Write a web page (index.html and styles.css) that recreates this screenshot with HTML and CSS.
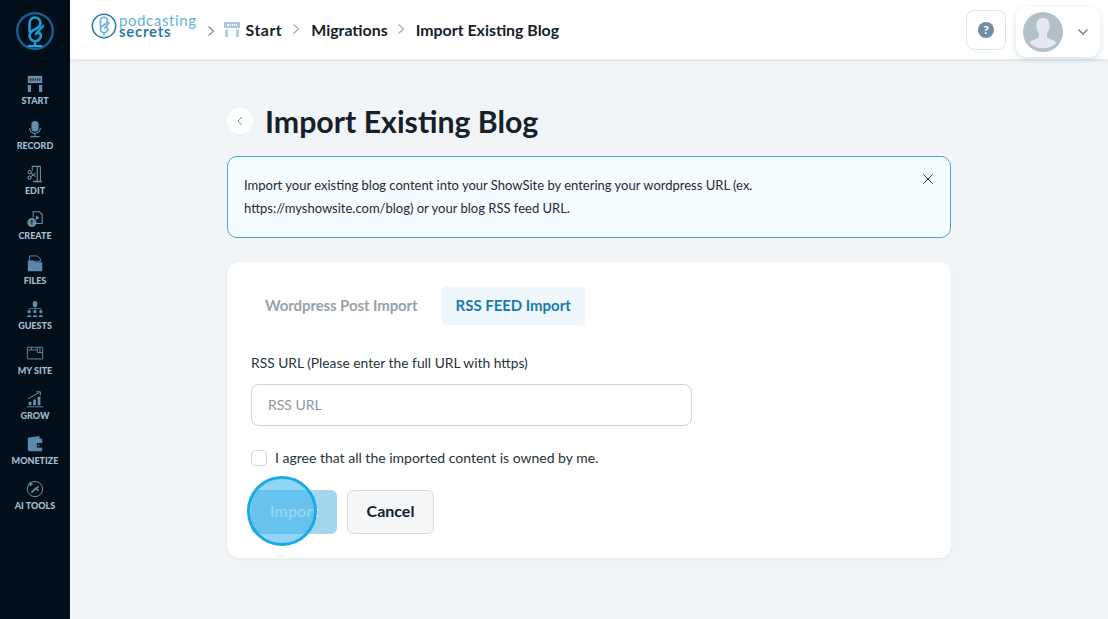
FILE: index.html
```html
<!DOCTYPE html>
<html lang="en">
<head>
<meta charset="utf-8">
<title>Import Existing Blog</title>
<link rel="stylesheet" href="styles.css">
</head>
<body>
<div class="app">
  <aside class="sidebar">
    <svg class="brand" viewBox="0 0 40 40" width="40" height="40" fill="none" stroke="#1c9ad6">
      <circle cx="20" cy="20" r="17.800" stroke="#12628f" stroke-width="2.400"/>
      <path d="M14.500 20V12a5.500 5.500 0 0 1 11 0c0 2.500-2 4.500-5 6-4 2-6 3.500-6 6.500a5.700 5.700 0 0 0 11.400 0c0-1.500-1-2.500-3-3M21 23l7-8M20 30.500v3.500" stroke-width="2.600" stroke-linecap="round"/>
      <path d="M13.500 35h13" stroke="#1fa6e6" stroke-width="2.200" stroke-linecap="round"/>
    </svg>
    <nav class="nav">
      <a class="nav-item"><svg viewBox="0 0 20 20" class="nav-icon"><path d="M2 1h16v8H2z" fill="#6d90aa"/><path d="M4 3.500h2v3H4zM7 3.500h1.500v3H7zM9.500 3.500h1.500v3H9.500zM12 3.500h1.500v3H12zM14.500 3.500h1.500v3h-1.500z" fill="#1f3546"/><path d="M2 11h3.500v8H2zM14.500 11H18v8h-3.500z" fill="#6d90aa"/></svg><span>START</span></a>
      <a class="nav-item"><svg viewBox="0 0 20 20" class="nav-icon"><rect x="6" y="1" width="8" height="12" rx="4" fill="#5f8fb3"/><path d="M4 9a6 6 0 0 0 12 0M10 15v3M5 18.500h10" stroke="#5f8fb3" stroke-width="1.200" fill="none"/></svg><span>RECORD</span></a>
      <a class="nav-item"><svg viewBox="0 0 20 20" class="nav-icon" fill="none" stroke="#6d90aa" stroke-width="1.200"><path d="M7 6V1.500h9V18H8M12.500 2v16M8 18.500h10"/><circle cx="4" cy="8" r="1.800"/><circle cx="4" cy="14" r="1.800"/><path d="M5.500 9l5 4M5.500 13l5-4"/></svg><span>EDIT</span></a>
      <a class="nav-item"><svg viewBox="0 0 20 20" class="nav-icon"><path d="M8 8V2h7l3 3v10h-7" fill="none" stroke="#6d90aa" stroke-width="1.200"/><path d="M11 6l4 2.500-4 2.500z" fill="#6d90aa"/><circle cx="6.500" cy="14" r="5" fill="#6d90aa"/><path d="M6.500 11.500v5M4.500 13.500l2-2 2 2" stroke="#08151f" fill="none"/></svg><span>CREATE</span></a>
      <a class="nav-item"><svg viewBox="0 0 20 20" class="nav-icon"><path d="M4 1h8l4 3v3H4z" fill="none" stroke="#6d90aa"/><path d="M2 6h6l2 2h8v10H2z" fill="#5c89ab"/></svg><span>FILES</span></a>
      <a class="nav-item"><svg viewBox="0 0 20 20" class="nav-icon" fill="#5f8fb3"><rect x="7.500" y="1" width="5" height="7" rx="2.500"/><circle cx="10" cy="13" r="1.800"/><circle cx="3.500" cy="13" r="1.800"/><circle cx="16.500" cy="13" r="1.800"/><path d="M1 19c0-3 5-3 5 0zM7.500 19c0-3 5-3 5 0zM14 19c0-3 5-3 5 0z"/><path d="M10 8v3M3.500 11V9.500h13V11" stroke="#5f8fb3" fill="none" stroke-width=".8"/></svg><span>GUESTS</span></a>
      <a class="nav-item"><svg viewBox="0 0 20 20" class="nav-icon" fill="none" stroke="#6d90aa"><path d="M1.500 2.500h17v12a1 1 0 0 1-1 1h-15a1 1 0 0 1-1-1z"/><path d="M1.500 5.500h11M12.500 2.500v6h6M15.500 2.500v6M6 2.500v3"/></svg><span>MY SITE</span></a>
      <a class="nav-item"><svg viewBox="0 0 20 20" class="nav-icon" fill="#6d90aa"><path d="M2 10L15 2.500M11.500 2H16v4" stroke="#6d90aa" stroke-width="1.100" fill="none"/><path d="M3 13h3v4H3zM8 10.500h3V17H8zM13 7.500h3V17h-3z"/><path d="M1 18.200h18v1H1z"/></svg><span>GROW</span></a>
      <a class="nav-item"><svg viewBox="0 0 20 20" class="nav-icon"><path d="M2 3l13-2v3h3v14H4a2 2 0 0 1-2-2z" fill="#5c89ab"/><path d="M12 9h7v5h-7z" fill="#08151f"/><circle cx="14" cy="11.500" r="1" fill="#5c89ab"/></svg><span>MONETIZE</span></a>
      <a class="nav-item"><svg viewBox="0 0 20 20" class="nav-icon" fill="none" stroke="#6d90aa" stroke-width="1.100"><circle cx="10" cy="10" r="8.500"/><path d="M6 14l5-5 3 3M14 7l-3 3" stroke-width="1.800"/><path d="M5 2v5M2.500 4.500h5" stroke-width="1.500"/></svg><span>AI TOOLS</span></a>
    </nav>
  </aside>

  <div class="workspace">
    <header class="topbar">
      <div class="crumbs">
        <div class="logo">
          <svg viewBox="0 0 40 40" width="26" height="26" fill="none" stroke="#5fb3dc">
            <circle cx="20" cy="20" r="18" stroke="#2f7ba8" stroke-width="2.400"/>
            <path d="M14.500 20V12a5.500 5.500 0 0 1 11 0c0 2.500-2 4.500-5 6-4 2-6 3.500-6 6.500a5.700 5.700 0 0 0 11.400 0c0-1.500-1-2.500-3-3M21 23l7-8M20 30.500v3.500" stroke-width="2.600" stroke-linecap="round"/>
          </svg>
          <div class="logo-text"><span class="logo-top">podcasting</span><span class="logo-bottom">secrets</span></div>
        </div>
        <svg class="chev chev-first" viewBox="0 0 8 12" width="8" height="12"><path d="M1.500 1.500L6.500 6l-5 4.500" fill="none" stroke="#8a949c" stroke-width="1.400"/></svg>
        <svg class="start-icon" viewBox="0 0 16 15" width="16" height="15"><path d="M0 0h16v6H0z" fill="#a9c6dc"/><path d="M3 2h2v2H3zM6 2h1v2H6zM8 2h1v2H8zM10 2h1v2h-1zM12 2h1v2h-1z" fill="#fff"/><path d="M1 7.500h3V15H1zM12 7.500h3V15h-3z" fill="#b7cfe1"/></svg>
        <span class="crumb crumb-start">Start</span>
        <svg class="chev" viewBox="0 0 8 12" width="8" height="12"><path d="M1.500 1.500L6.500 6l-5 4.500" fill="none" stroke="#a3abb2" stroke-width="1.200"/></svg>
        <span class="crumb">Migrations</span>
        <svg class="chev" viewBox="0 0 8 12" width="8" height="12"><path d="M1.500 1.500L6.500 6l-5 4.500" fill="none" stroke="#a3abb2" stroke-width="1.200"/></svg>
        <span class="crumb">Import Existing Blog</span>
      </div>
      <div class="top-actions">
        <button class="help-btn" type="button"><span class="help-dot">?</span></button>
        <div class="user">
          <svg class="avatar" viewBox="0 0 40 40" width="40" height="40">
            <circle cx="20" cy="20" r="20" fill="#b3c0c8"/>
            <path d="M20 6c-5 0-7 4-6.500 9 .3 3 1.500 5 2.500 6.500V25c-1 2-7 2.500-9.500 6A20 20 0 0 0 33.500 31C31 27.500 25 27 24 25v-3.500c1-1.500 2.200-3.500 2.500-6.500.5-5-1.500-9-6.500-9z" fill="#e3e9ec"/>
          </svg>
          <svg viewBox="0 0 12 8" width="12" height="8"><path d="M1.500 1.500L6 6l4.500-4.500" fill="none" stroke="#6f8ea6" stroke-width="1.600"/></svg>
        </div>
      </div>
    </header>

    <main class="content">
      <div class="title-row">
        <button class="back" type="button"><svg viewBox="0 0 6 10" width="6" height="10"><path d="M5 1L1 5l4 4" fill="none" stroke="#4aa5cf" stroke-width="1"/></svg></button>
        <h1>Import Existing Blog</h1>
      </div>
      <div class="alert">
        <p>Import your existing blog content into your ShowSite by entering your wordpress URL (ex. https://myshowsite.com/blog) or your blog RSS feed URL.</p>
        <svg class="close" viewBox="0 0 10 10" width="10" height="10"><path d="M.5.500l9 9M9.500.500l-9 9" stroke="#24323c" stroke-width="1"/></svg>
      </div>
      <section class="card">
        <div class="tabs">
          <span class="tab">Wordpress Post Import</span>
          <span class="tab tab-active">RSS FEED Import</span>
        </div>
        <label class="field-label" for="rss">RSS URL (Please enter the full URL with https)</label>
        <input class="input" id="rss" type="text" placeholder="RSS URL">
        <label class="agree"><span class="check"></span>I agree that all the imported content is owned by me.</label>
        <div class="actions">
          <button class="btn btn-primary" type="button">Import</button>
          <button class="btn btn-cancel" type="button">Cancel</button>
          <span class="click-mark"></span>
        </div>
      </section>
    </main>
  </div>
</div>
</body>
</html>
```
FILE: styles.css
```css
* { box-sizing: border-box; }
html, body { margin: 0; height: 100%; overflow: hidden; }
body { font-family: "Lato", "Open Sans", sans-serif; color: #14202a; background: #f1f5f8; }
.app { display: flex; height: 619px; }

.sidebar { width: 70px; flex: none; background: #020f1a; display: flex; flex-direction: column; align-items: center; padding-top: 11px; }
.brand { display: block; }
.nav { display: flex; flex-direction: column; margin-top: 24px; width: 100%; }
.nav-item { height: 45px; display: flex; flex-direction: column; align-items: center; justify-content: flex-start; gap: 2px; }
.nav-icon { width: 18px; height: 18px; display: block; }
.nav-item span { font-size: 9px; font-weight: 900; line-height: 11px; color: #a3bfd3; white-space: nowrap; }

.workspace { flex: 1; display: flex; flex-direction: column; min-width: 0; }
.topbar { height: 59px; flex: none; background: #fff; box-shadow: 0 1px 4px rgba(40, 70, 90, .13); display: flex; align-items: center; justify-content: space-between; padding: 0 8px 0 21px; }
.crumbs { display: flex; align-items: center; }
.logo { display: flex; align-items: center; gap: 2px; margin-bottom: 8px; }
.logo-text { display: flex; flex-direction: column; line-height: 11px; }
.logo-top { font-size: 15px; color: #5fb3dc; letter-spacing: .6px; }
.logo-bottom { font-size: 15px; color: #2f7ba8; letter-spacing: .7px; font-weight: 700; }
.chev { margin: 0 11px 0 9px; position: relative; top: -1px; }
.chev-first { margin: 3px 9px 0 10px; top: 0; }
.start-icon { margin-right: 6px; }
.crumb { font-size: 15.900px; font-weight: 700; color: #14202a; }
.crumb-start { letter-spacing: .5px; margin-right: 1px; }
.top-actions { display: flex; align-items: center; gap: 10px; }
.help-btn { width: 40px; height: 40px; background: #fff; border: 1px solid #dfe6ea; border-radius: 8px; display: flex; align-items: center; justify-content: center; padding: 0; }
.help-dot { width: 16px; height: 16px; border-radius: 50%; background: #6f8ea6; color: #fff; font: 900 12px/16px "Lato", sans-serif; text-align: center; }
.user { width: 84px; height: 50px; background: #fff; border-radius: 10px; box-shadow: 0 2px 6px rgba(40, 70, 90, .18); display: flex; align-items: center; gap: 14px; padding-left: 7px; margin-top: 4px; }
.avatar { display: block; flex: none; }

.content { width: 724px; margin-left: 157px; }
.title-row { display: flex; align-items: center; gap: 12px; height: 40px; margin-top: 42px; }
.back { width: 26px; height: 26px; border-radius: 50%; background: #fff; border: 0; padding: 0; display: flex; align-items: center; justify-content: center; }
h1 { margin: 0; font-size: 30.300px; line-height: 40px; font-weight: 700; color: #14202a; }
.alert { margin-top: 15px; height: 82px; background: #f4fcff; border: 1px solid #45a9c4; border-radius: 10px; padding: 17px 60px 0 16px; position: relative; }
.alert p { margin: 0; font-size: 13px; line-height: 23px; color: #1d2a33; }
.close { position: absolute; top: 17px; right: 17px; }
.card { margin-top: 24px; height: 296px; background: #fff; border-radius: 12px; box-shadow: 0 1px 3px rgba(40, 70, 90, .08); padding: 24px; }
.tabs { display: flex; gap: 10px; margin-bottom: 29px; }
.tab { height: 39px; padding: 0 14px; font-size: 15px; font-weight: 700; line-height: 39px; letter-spacing: -.1px; color: #98a1a8; border-radius: 4px; }
.tab-active { background: #eef7fc; color: #1b7ba8; letter-spacing: -.04px; }
.field-label { display: block; font-size: 13.800px; line-height: 18px; color: #26323b; }
.input { display: block; width: 441px; height: 42px; margin-top: 12px; border: 1px solid #ccd3d8; border-radius: 8px; padding: 0 16px 2px; font: 14px "Lato", sans-serif; outline: 0; }
.input::placeholder { color: #8d969d; }
.agree { display: flex; align-items: center; gap: 8px; margin-top: 24px; font-size: 14px; line-height: 16px; color: #26323b; }
.check { width: 16px; height: 16px; border: 1px solid #d3d9dd; border-radius: 4px; background: #fff; }
.actions { display: flex; gap: 10px; margin-top: 24px; position: relative; }
.btn { height: 44px; border-radius: 6px; padding: 0 0 3px; font: 700 16px "Lato", sans-serif; }
.btn-primary { width: 86px; background: #a3d6ef; border: 0; color: #fff; }
.btn-cancel { width: 87px; background: #f6f7f8; border: 1px solid #d8dcdf; color: #14202a; }
.click-mark { position: absolute; left: -4px; top: -14px; width: 70px; height: 70px; border-radius: 50%; border: 3px solid #1aa9e2; background: rgba(55, 180, 235, .55); }
```
